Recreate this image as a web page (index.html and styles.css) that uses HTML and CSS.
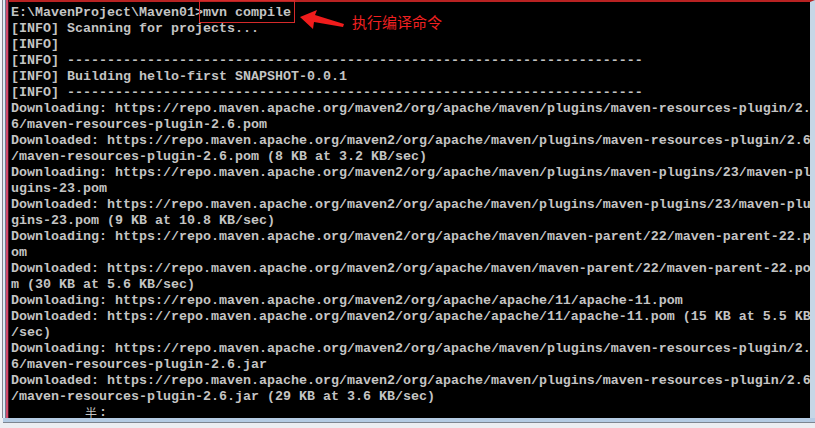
FILE: index.html
```html
<!DOCTYPE html>
<html lang="zh-CN">
<head>
    <meta charset="UTF-8">
    <meta name="viewport" content="width=device-width, initial-scale=1.0">
    <title>mvn compile</title>
<link rel="stylesheet" href="styles.css">
</head>
<body>
    <div class="screen">
        <div class="frame">
            <div class="console">
<pre class="output">E:\MavenProject\Maven01&gt;mvn compile
[INFO] Scanning for projects...
[INFO]
[INFO] ------------------------------------------------------------------------
[INFO] Building hello-first SNAPSHOT-0.0.1
[INFO] ------------------------------------------------------------------------
Downloading: https://repo.maven.apache.org/maven2/org/apache/maven/plugins/maven-resources-plugin/2.
6/maven-resources-plugin-2.6.pom
Downloaded: https://repo.maven.apache.org/maven2/org/apache/maven/plugins/maven-resources-plugin/2.6
/maven-resources-plugin-2.6.pom (8 KB at 3.2 KB/sec)
Downloading: https://repo.maven.apache.org/maven2/org/apache/maven/plugins/maven-plugins/23/maven-pl
ugins-23.pom
Downloaded: https://repo.maven.apache.org/maven2/org/apache/maven/plugins/maven-plugins/23/maven-plu
gins-23.pom (9 KB at 10.8 KB/sec)
Downloading: https://repo.maven.apache.org/maven2/org/apache/maven/maven-parent/22/maven-parent-22.p
om
Downloaded: https://repo.maven.apache.org/maven2/org/apache/maven/maven-parent/22/maven-parent-22.po
m (30 KB at 5.6 KB/sec)
Downloading: https://repo.maven.apache.org/maven2/org/apache/apache/11/apache-11.pom
Downloaded: https://repo.maven.apache.org/maven2/org/apache/apache/11/apache-11.pom (15 KB at 5.5 KB
/sec)
Downloading: https://repo.maven.apache.org/maven2/org/apache/maven/plugins/maven-resources-plugin/2.
6/maven-resources-plugin-2.6.jar
Downloaded: https://repo.maven.apache.org/maven2/org/apache/maven/plugins/maven-resources-plugin/2.6
/maven-resources-plugin-2.6.jar (29 KB at 3.6 KB/sec)
         <span class="ime">半</span>:</pre>
            </div>
        </div>
        <div class="bottom-bar"></div>

        <!-- red annotation drawn over the console -->
        <div class="mark-box"></div>
        <svg class="arrow" width="50" height="24" viewBox="0 0 50 24">
            <polygon points="0,7 17,0 15,5 44,14 43,17 14,12 13,19" fill="#f01c1c"/>
        </svg>
        <span class="note">执行编译命令</span>
    </div>
</body>
</html>
```

FILE: styles.css
```css
body{
    margin: 0;
    background-color: #eceef2;
}
.screen{
    position: relative;
    width: 815px;
    height: 428px;
    overflow: hidden;
}
.frame{
    display: flex;
    padding-left: 9px;
    background: linear-gradient(to right, #f3f3f8 0 2px, #84848f 2px 3px, #dce8f4 3px 5px, #6a7a90 5px 6px, #d04a6a 6px 8px, #401020 8px 9px);
}
.console{
    width: 801px;
    height: 416px;
    background-color: #000;
    border-top: 2px solid #b82222;
    border-right: 5px solid #c6d6e6;
    overflow: hidden;
}
.output{
    margin: 0;
    padding: 3px 0 0 2px;
    font-family: "Liberation Mono", "DejaVu Sans Mono", monospace;
    font-size: 13.33px;
    font-weight: bold;
    line-height: 16px;
    color: #c4c4c4;
    white-space: pre;
}
.ime{
    display: inline-block;
    width: 16px;
    height: 16px;
    vertical-align: top;
    font-family: "Noto Sans CJK SC", sans-serif;
    font-weight: normal;
    font-size: 12px;
    line-height: 16px;
    text-align: center;
}
.bottom-bar{
    height: 4px;
    margin-left: 3px;
    background-color: #b4cbe3;
    border-bottom: 1px solid #7d8590;
}
.mark-box{
    position: absolute;
    left: 199px;
    top: 0;
    width: 94px;
    height: 21px;
    border: 1px solid #d42a2a;
}
.arrow{
    position: absolute;
    left: 300px;
    top: 10px;
}
.note{
    position: absolute;
    left: 352px;
    top: 12px;
    font-family: "Noto Sans CJK SC", sans-serif;
    font-size: 15px;
    line-height: 20px;
    color: #f02020;
}
```
